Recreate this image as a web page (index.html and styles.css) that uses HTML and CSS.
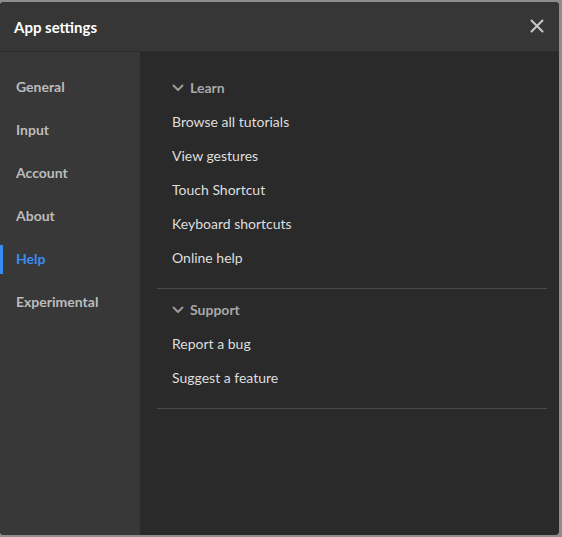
FILE: index.html
```html
<!DOCTYPE html>
<html lang="en">
<head>
    <meta charset="UTF-8">
    <title>App settings</title>
    <link rel="stylesheet" href="styles.css">
</head>
<body>
    <div class="dialog">
        <div class="dialog-header">
            <h1>App settings</h1>
            <button class="close-btn" aria-label="Close">
                <svg width="14" height="14" viewBox="0 0 14 14">
                    <path d="M1.5 1.5 L12.5 12.5 M12.5 1.5 L1.5 12.5" stroke="#c8c8c8" stroke-width="2" stroke-linecap="round"/>
                </svg>
            </button>
        </div>
        <div class="dialog-body">
            <nav class="sidebar">
                <a class="nav-item">General</a>
                <a class="nav-item">Input</a>
                <a class="nav-item">Account</a>
                <a class="nav-item">About</a>
                <a class="nav-item active">Help</a>
                <a class="nav-item">Experimental</a>
            </nav>
            <main class="content">
                <section class="group">
                    <div class="group-title">
                        <svg class="chevron" width="12" height="8" viewBox="0 0 12 8">
                            <path d="M1.5 1.5 L6 6 L10.5 1.5" fill="none" stroke="#9a9a9a" stroke-width="2" stroke-linecap="round" stroke-linejoin="round"/>
                        </svg>
                        Learn
                    </div>
                    <a class="link">Browse all tutorials</a>
                    <a class="link">View gestures</a>
                    <a class="link">Touch Shortcut</a>
                    <a class="link">Keyboard shortcuts</a>
                    <a class="link">Online help</a>
                </section>
                <section class="group">
                    <div class="group-title">
                        <svg class="chevron" width="12" height="8" viewBox="0 0 12 8">
                            <path d="M1.5 1.5 L6 6 L10.5 1.5" fill="none" stroke="#9a9a9a" stroke-width="2" stroke-linecap="round" stroke-linejoin="round"/>
                        </svg>
                        Support
                    </div>
                    <a class="link">Report a bug</a>
                    <a class="link">Suggest a feature</a>
                </section>
            </main>
        </div>
    </div>
</body>
</html>
```

FILE: styles.css
```css
* {
    margin: 0;
    padding: 0;
    box-sizing: border-box;
}

body {
    background: #8d8d8d;
    font-family: 'Lato', 'Noto Sans', sans-serif;
    height: 537px;
    overflow: hidden;
}

.dialog {
    margin-top: 2px;
    width: 559px;
    height: 533px;
    border-radius: 4px;
    overflow: hidden;
    display: flex;
    flex-direction: column;
    background: #2a2a2a;
}

.dialog-header {
    height: 50px;
    flex-shrink: 0;
    display: flex;
    align-items: center;
    justify-content: space-between;
    padding: 0 15px 0 14px;
    background: #363636;
    border-bottom: 1px solid #2b2b2b;
}

h1 {
    font-size: 15px;
    font-weight: bold;
    color: #ffffff;
}

.close-btn {
    background: none;
    border: none;
    width: 14px;
    height: 14px;
    display: flex;
    cursor: pointer;
    margin-top: -2px;
}

.dialog-body {
    flex: 1;
    display: flex;
}

.sidebar {
    width: 140px;
    background: #383838;
    display: flex;
    flex-direction: column;
    padding-top: 21px;
}

.nav-item {
    position: relative;
    height: 43px;
    line-height: 28px;
    padding-left: 16px;
    font-size: 14px;
    font-weight: bold;
    color: #bcbcbc;
}

.nav-item.active {
    color: #3a8df0;
}

.nav-item.active::before {
    content: '';
    position: absolute;
    left: 0;
    top: 0;
    width: 3px;
    height: 29px;
    background: #3a8df0;
}

.content {
    flex: 1;
    padding: 23px 12px 0 17px;
}

.group {
    border-bottom: 1px solid #4a4a4a;
    padding-bottom: 18px;
    margin-bottom: 8px;
}

.group-title {
    display: flex;
    align-items: center;
    gap: 6px;
    height: 24px;
    padding-left: 15px;
    font-size: 14px;
    font-weight: bold;
    color: #a8a8a8;
    margin-bottom: 11px;
}

.chevron {
    margin-top: 1px;
}

.link {
    display: block;
    height: 34px;
    line-height: 24px;
    padding-left: 15px;
    font-size: 14px;
    color: #dedede;
}

.link:last-child {
    height: 24px;
}
```
